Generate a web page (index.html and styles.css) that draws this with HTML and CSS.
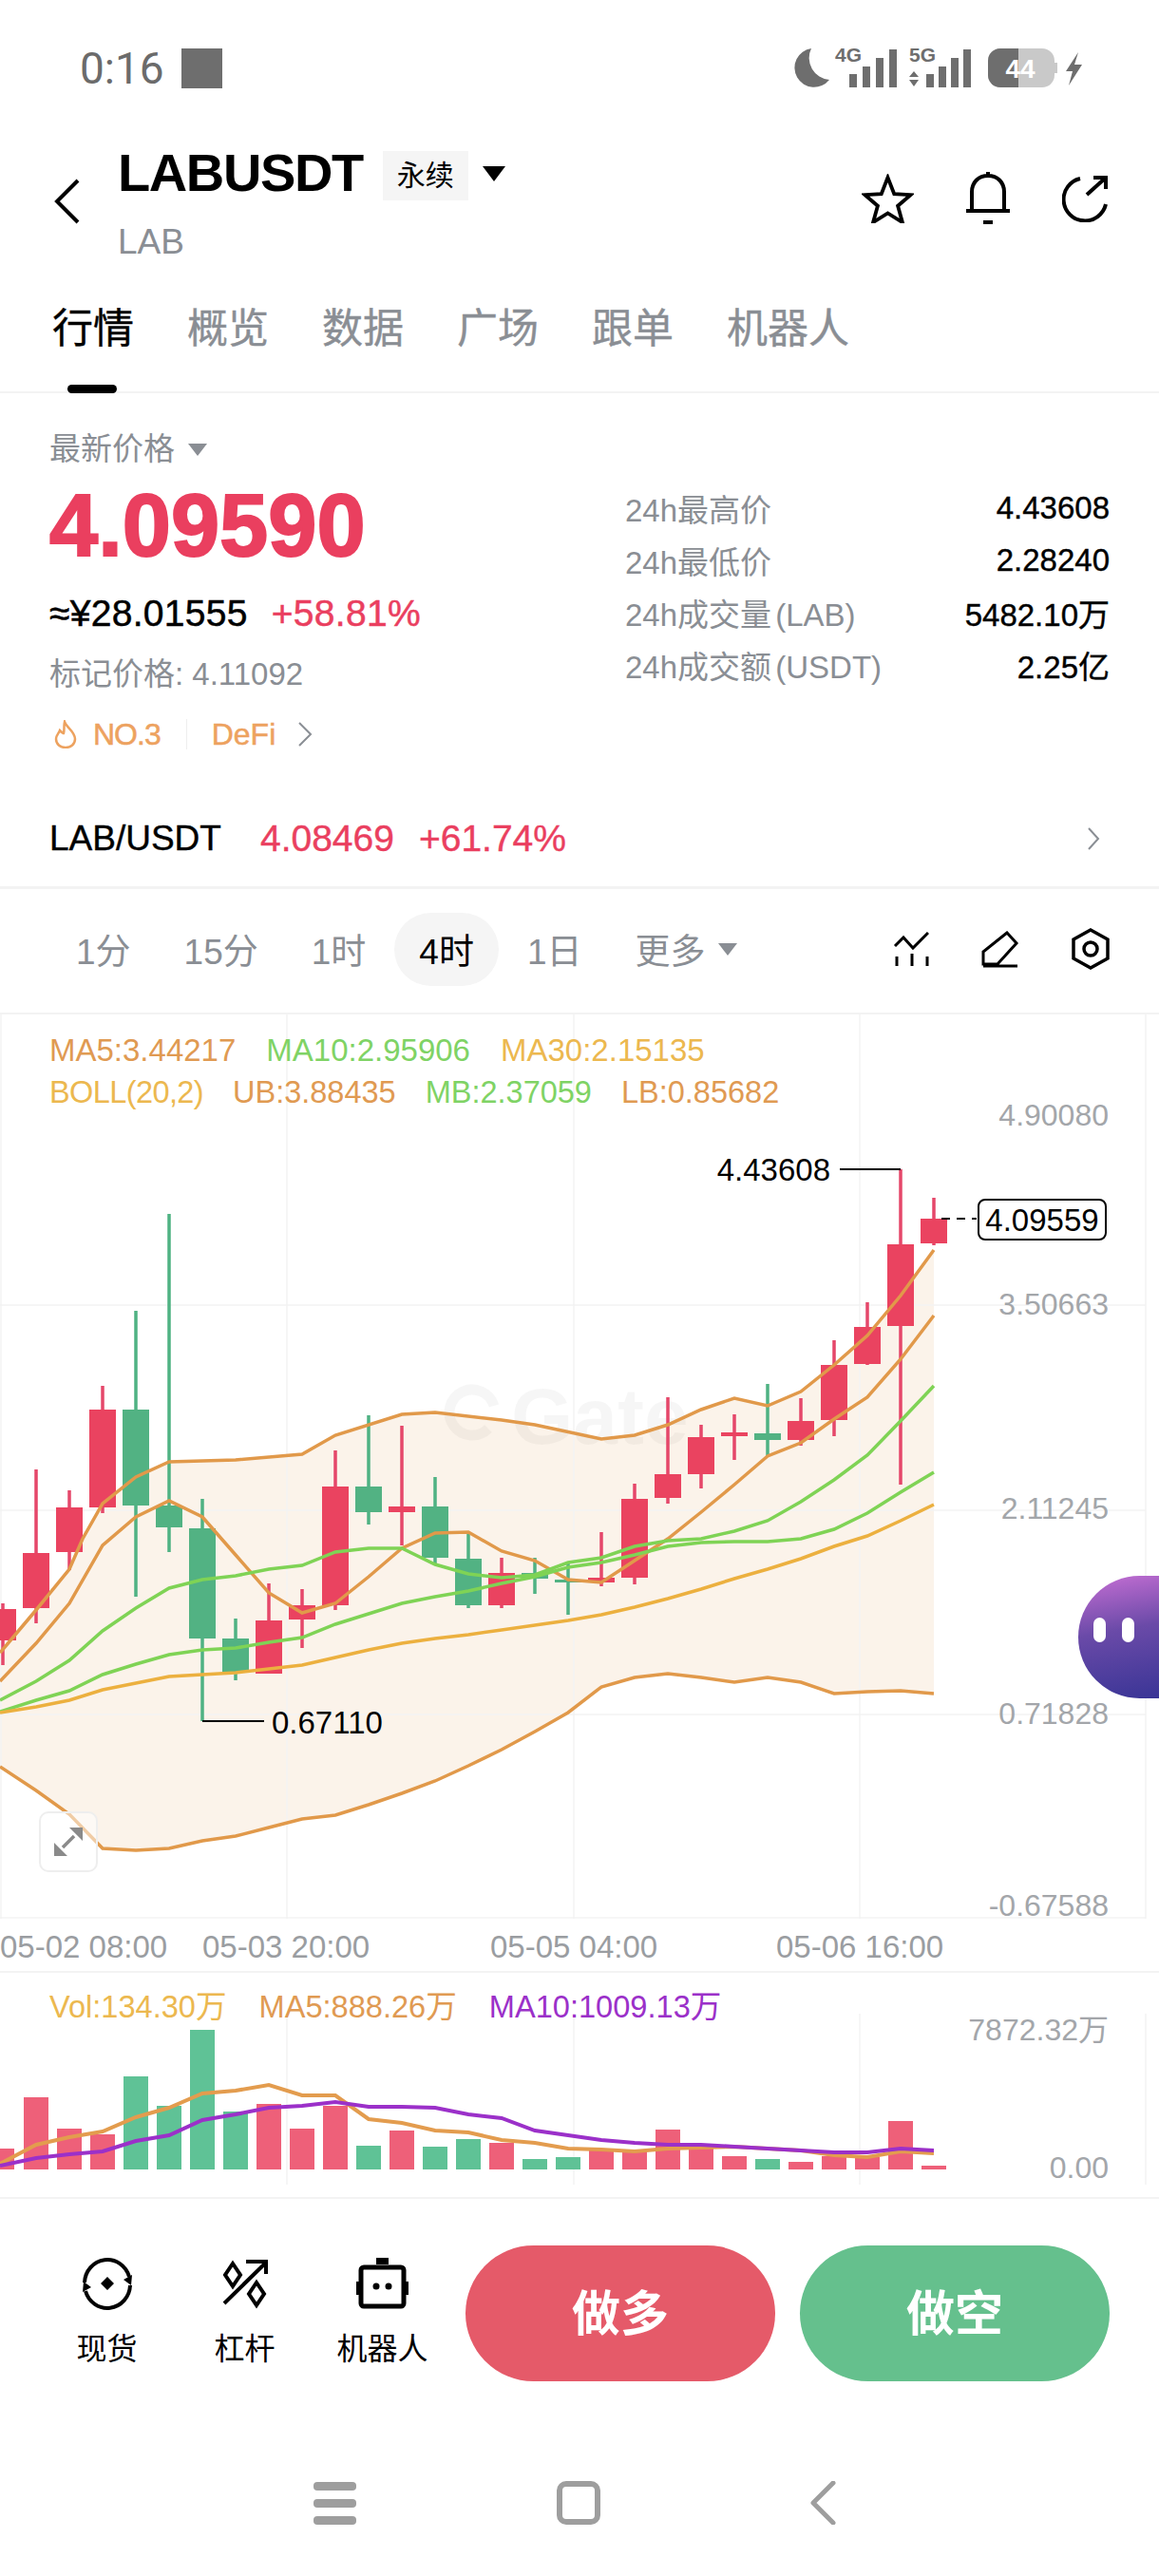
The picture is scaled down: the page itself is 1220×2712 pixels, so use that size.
FILE: index.html
```html
<!DOCTYPE html>
<html lang="zh">

<head>
    <meta charset="UTF-8" />
    <meta name="viewport" content="width=device-width, initial-scale=1" />
    <title>LABUSDT 永续</title>
    <link rel="stylesheet" href="styles.css">
</head>

<body>
    <div class="status-bar">
        <div class="status-left">
            <span class="status-time">0:16</span>
            <span class="status-square"></span>
        </div>
        <svg class="status-icons" width="307" height="48" viewBox="0 -6 307 48">
            <path d="M21 0A20.5 20.5 0 1 0 40 33A23 23 0 0 1 21 0Z" fill="#6e6e6e" />
            <text class="net" x="60" y="14">4G</text>
            <path d="M61 27h8v14h-8zM75 19h8v22h-8zM89 10h8v31h-8zM103 1h8v40h-8z" fill="#6e6e6e" />
            <text class="net" x="138" y="14">5G</text>
            <path d="M129 24l5 6h-10zM129 40l5-7h-10z" fill="#6e6e6e" />
            <path d="M142 27h8v14h-8zM155 19h8v22h-8zM168 10h8v31h-8zM181 1h8v40h-8z" fill="#6e6e6e" />
            <rect x="207" y="0" width="70" height="41" rx="13" fill="#c9c9c9" />
            <path d="M220 0h19v41h-19a13 13 0 0 1-13-13V13a13 13 0 0 1 13-13Z" fill="#6e6e6e" />
            <path d="M277 15h3v11h-3z" fill="#c9c9c9" />
            <text class="batt" x="241" y="31">44</text>
            <path d="M302 4L289 24h7l-4 15 14-22h-8Z" fill="#6e6e6e" />
        </svg>
    </div>

    <header class="header">
        <svg class="back-icon" width="27" height="48" viewBox="0 0 27 48">
            <path d="M25 2L3 24l22 22" fill="none" stroke="#000" stroke-width="4" />
        </svg>
        <div class="title-block">
            <div class="title-row">
                <h1>LABUSDT</h1>
                <span class="badge">永续</span>
                <span class="caret"></span>
            </div>
            <div class="subtitle">LAB</div>
        </div>
        <div class="header-icons">
            <svg width="55" height="52" viewBox="0 0 56 54">
                <path d="M28 4l7 18 18 1-14 12 5 18-16-10-16 10 5-18L3 23l18-1Z" fill="none" stroke="#000" stroke-width="4" />
            </svg>
            <svg width="48" height="56" viewBox="0 0 48 56">
                <path d="M7 39V21C7 11 14 4 24 4s17 7 17 17v18M1 41h46M24 0v5M19 53h10" fill="none" stroke="#000" stroke-width="4" />
            </svg>
            <svg width="48" height="50" viewBox="0 0 48 50">
                <path d="M19 4a22.5 22.5 0 1 0 27 27M26 21L46 3M33 3h13v12" fill="none" stroke="#000" stroke-width="4" />
            </svg>
        </div>
    </header>

    <nav class="tabs">
        <a class="tab active">行情</a>
        <a class="tab">概览</a>
        <a class="tab">数据</a>
        <a class="tab">广场</a>
        <a class="tab">跟单</a>
        <a class="tab">机器人</a>
    </nav>

    <section class="market">
        <div class="market-left">
            <div class="price-label">最新价格<span class="caret-gray"></span></div>
            <div class="last-price">4.09590</div>
            <div class="price-sub">
                <span>≈¥28.01555</span>
                <span class="red">+58.81%</span>
            </div>
            <div class="mark-price">标记价格: 4.11092</div>
            <div class="tags">
                <svg width="24" height="30" viewBox="0 0 24 30">
                    <path d="M11 2c2 6 11 10 11 18 0 6-5 9-10 9S2 26 2 20c0-4 3-6 4-9 2 2 3 3 4 3 1-4 0-8 1-12Z" fill="none" stroke="#eda25f" stroke-width="2.5" />
                </svg>
                <span class="tag-rank">NO.3</span>
                <span class="tag-line"></span>
                <span class="tag-name">DeFi</span>
                <svg width="16" height="28" viewBox="0 0 16 28">
                    <path d="M2 2l12 12L2 26" fill="none" stroke="#8a8e94" stroke-width="2" />
                </svg>
            </div>
        </div>
        <div class="market-right">
            <div class="stat"><span class="stat-name">24h最高价</span><span>4.43608</span></div>
            <div class="stat"><span class="stat-name">24h最低价</span><span>2.28240</span></div>
            <div class="stat"><span class="stat-name">24h成交量 (LAB)</span><span>5482.10万</span></div>
            <div class="stat"><span class="stat-name">24h成交额 (USDT)</span><span>2.25亿</span></div>
        </div>
    </section>

    <div class="pair-row">
        <span class="pair-name">LAB/USDT</span>
        <span class="red pair-price">4.08469</span>
        <span class="red pair-change">+61.74%</span>
        <svg class="pair-arrow" width="14" height="26" viewBox="0 0 14 26">
            <path d="M2 2l10 11L2 24" fill="none" stroke="#8a8e94" stroke-width="2" />
        </svg>
    </div>

    <div class="periods">
        <span class="period">1分</span>
        <span class="period">15分</span>
        <span class="period">1时</span>
        <span class="period active">4时</span>
        <span class="period">1日</span>
        <span class="period">更多<span class="caret-gray"></span></span>
        <div class="period-tools">
            <svg width="38" height="37" viewBox="0 0 38 37">
                <path d="M2 15L11 6l10 11L37 1M4 26v10M20 23v13M36 26v10" fill="none" stroke="#000" stroke-width="3" />
            </svg>
            <svg width="40" height="39" viewBox="0 0 40 39">
                <path d="M27 2L2 22v13h15l20-22ZM2 37h36" fill="none" stroke="#000" stroke-width="3" />
            </svg>
            <svg width="40" height="44" viewBox="0 0 40 44">
                <path d="M20 2l18 10v20L20 42 2 32V12Z" fill="none" stroke="#000" stroke-width="3.5" />
                <circle cx="20" cy="22" r="7" fill="none" stroke="#000" stroke-width="3.5" />
            </svg>
        </div>
    </div>

    <section class="chart">
        <div class="legend">
            <div class="legend-row ma-row">
                <span class="c-orange">MA5:3.44217</span>
                <span class="c-green">MA10:2.95906</span>
                <span class="c-yellow">MA30:2.15135</span>
            </div>
            <div class="legend-row">
                <span class="c-yellow boll-name">BOLL(20,2)</span>
                <span class="c-orange">UB:3.88435</span>
                <span class="c-green">MB:2.37059</span>
                <span class="c-orange">LB:0.85682</span>
            </div>
        </div>

        <svg class="chart-svg" width="1220" height="952" viewBox="0 1068 1220 952">
            <!-- boll band -->
            <path class="band" d="M0 1740L38 1695 73 1652 87 1620 108 1583 143 1555 178 1539 248 1537 318 1531 353 1511 423 1489 458 1487 528 1495 563 1500 633 1515 668 1511 703 1500 738 1484 773 1472 808 1480 843 1465 878 1437 913 1406 948 1364 983 1316V1783L948 1780 913 1781 878 1783 843 1771 808 1766 773 1771 738 1766 703 1762 668 1766 633 1776 598 1803 563 1823 528 1842 493 1859 458 1875 423 1888 388 1900 353 1911 318 1915 283 1924 248 1933 213 1938 178 1946 143 1948 108 1946 73 1910 38 1885 0 1860Z" />

            <path class="grid" d="M1 1068V2020M302 1068V2020M604 1068V2020M905 1068V2020M1206 1068V2020M0 1374H1206M0 1590H1206M0 1805H1206M0 2019H1206" />

            <!-- watermark -->
            <path class="mark-ring" d="M520 1480a24 24 0 1 0 -6 24" />
            <text class="mark-text" x="538" y="1520">Gate</text>

            <!-- candles -->
            <path class="wick-up" d="M3 1688V1753M38 1547V1709M73 1569V1653M108 1459V1593M283 1667V1762M318 1673V1735M353 1527V1695M423 1501V1627M528 1640V1693M633 1613V1670M668 1562V1668M703 1471V1583M738 1500V1567M773 1489V1537M843 1472V1522M878 1411V1512M913 1371V1437M948 1231V1563M983 1261V1311" />
            <path class="body-up" d="M-11 1694h28v33h-28zM24 1635h28v58h-28zM59 1587h28v47h-28zM94 1484h28v103h-28zM269 1706h28v56h-28zM304 1690h28v15h-28zM339 1565h28v125h-28zM409 1586h28v6h-28zM514 1656h28v34h-28zM619 1661h28v5h-28zM654 1578h28v83h-28zM689 1552h28v25h-28zM724 1513h28v39h-28zM759 1508h28v4h-28zM829 1496h28v20h-28zM864 1437h28v58h-28zM899 1397h28v39h-28zM934 1310h28v86h-28zM969 1283h28v26h-28z" />
            <path class="wick-down" d="M143 1380V1681M178 1278V1634M213 1578V1812M248 1704V1769M388 1490V1605M458 1555V1647M493 1612V1693M563 1640V1678M598 1645V1700M808 1457V1533" />
            <path class="body-down" d="M129 1484h28v101h-28zM164 1585h28v23h-28zM199 1609h28v116h-28zM234 1725h28v35h-28zM374 1565h28v27h-28zM444 1586h28v54h-28zM479 1641h28v49h-28zM549 1656h28v6h-28zM584 1663h28v3h-28zM794 1509h28v7h-28z" />

            <!-- indicators -->
            <polyline class="line-orange" points="0,1740 38,1695 73,1652 87,1620 108,1583 143,1555 178,1539 248,1537 318,1531 353,1511 423,1489 458,1487 528,1495 563,1500 633,1515 668,1511 703,1500 738,1484 773,1472 808,1480 843,1465 878,1437 913,1406 948,1364 983,1316" />
            <polyline class="line-orange" points="0,1770 38,1730 73,1688 108,1627 143,1597 178,1580 213,1597 248,1637 283,1677 318,1698 353,1688 388,1660 423,1630 458,1614 493,1613 528,1633 563,1643 598,1663 633,1666 668,1643 703,1620 738,1592 773,1563 808,1533 843,1519 878,1494 913,1471 948,1431 983,1385" />
            <polyline class="line-orange" points="0,1860 38,1885 73,1910 108,1946 143,1948 178,1946 213,1938 248,1933 283,1924 318,1915 353,1911 388,1900 423,1888 458,1875 493,1859 528,1842 563,1823 598,1803 633,1776 668,1766 703,1762 738,1766 773,1771 808,1766 843,1771 878,1783 913,1781 948,1780 983,1783" />
            <polyline class="line-green" points="0,1790 38,1770 73,1748 108,1717 143,1693 178,1672 213,1663 248,1659 283,1652 318,1648 353,1634 388,1630 423,1630 458,1647 493,1657 528,1661 563,1658 598,1645 633,1640 668,1628 703,1622 738,1620 773,1612 808,1601 843,1581 878,1558 913,1532 948,1496 983,1459" />
            <polyline class="line-green" points="0,1802 38,1790 73,1780 108,1763 143,1752 178,1742 213,1737 248,1735 283,1729 318,1724 353,1710 388,1699 423,1688 458,1681 493,1675 528,1667 563,1660 598,1650 633,1645 668,1637 703,1628 738,1624 773,1623 808,1623 843,1620 878,1610 913,1593 948,1571 983,1550" />
            <polyline class="line-yellow" points="0,1803 38,1797 73,1790 108,1779 143,1772 178,1765 213,1763 248,1761 283,1757 318,1753 353,1745 388,1737 423,1730 458,1725 493,1721 528,1716 563,1711 598,1706 633,1700 668,1692 703,1683 738,1673 773,1662 808,1652 843,1641 878,1628 913,1617 948,1601 983,1584" />

            <!-- high, low and last price -->
            <path class="leader" d="M884 1231H948M213 1812H278" />
            <text class="price-note" x="874" y="1243" text-anchor="end">4.43608</text>
            <text class="price-note" x="286" y="1825">0.67110</text>
            <path class="dash" d="M991 1283H1028" />
            <rect class="last-box" x="1030" y="1263" width="134" height="42" rx="7" />
            <text class="price-note" x="1097" y="1296" text-anchor="middle">4.09559</text>

            <text class="axis" x="1167" y="1185">4.90080</text>
            <text class="axis" x="1167" y="1384">3.50663</text>
            <text class="axis" x="1167" y="1599">2.11245</text>
            <text class="axis" x="1167" y="1815">0.71828</text>
            <text class="axis" x="1167" y="2017">-0.67588</text>
        </svg>

        <button class="expand-btn">
            <svg width="30" height="30" viewBox="0 0 30 30">
                <path d="M30 0v14L16 0ZM0 30V16l14 14Z" fill="#8a8a8a" />
                <path d="M21 9l-12 12" stroke="#8a8a8a" stroke-width="3.5" />
            </svg>
        </button>

        <div class="bubble">
            <span class="bubble-eye"></span>
            <span class="bubble-eye"></span>
        </div>
    </section>

    <div class="time-axis">
        <span>05-02 08:00</span>
        <span>05-03 20:00</span>
        <span>05-05 04:00</span>
        <span>05-06 16:00</span>
    </div>

    <section class="volume">
        <div class="vol-legend">
            <span class="c-yellow">Vol:134.30万</span>
            <span class="c-orange">MA5:888.26万</span>
            <span class="c-purple">MA10:1009.13万</span>
        </div>
        <svg class="chart-svg" width="1220" height="236" viewBox="0 2077 1220 236">
            <path class="grid" d="M302 2120V2300M604 2120V2300M905 2120V2300M1206 2120V2300" />
            <path class="vol-up" d="M-11 2262h26v22h-26zM25 2208h26v76h-26zM60 2241h26v43h-26zM95 2247h26v37h-26zM270 2215h26v69h-26zM305 2241h26v43h-26zM340 2217h26v67h-26zM410 2243h26v41h-26zM515 2256h26v28h-26zM620 2264h26v20h-26zM655 2264h26v20h-26zM690 2242h26v42h-26zM725 2260h26v24h-26zM760 2270h26v14h-26zM830 2276h26v8h-26zM865 2270h26v14h-26zM900 2271h26v13h-26zM935 2233h26v51h-26zM970 2280h26v4h-26z" />
            <path class="vol-down" d="M130 2186h26v98h-26zM165 2217h26v67h-26zM200 2137h26v147h-26zM235 2223h26v61h-26zM375 2259h26v25h-26zM445 2260h26v24h-26zM480 2252h26v32h-26zM550 2273h26v11h-26zM585 2271h26v13h-26zM795 2273h26v11h-26z" />
            <polyline class="vol-ma5" points="0,2278 38,2258 73,2250 108,2244 143,2229 178,2219 213,2204 248,2201 283,2195 318,2206 353,2206 388,2231 423,2235 458,2243 493,2245 528,2253 563,2256 598,2262 633,2263 668,2265 703,2262 738,2261 773,2260 808,2262 843,2264 878,2269 913,2271 948,2265 983,2267" />
            <polyline class="vol-ma10" points="0,2280 38,2272 73,2268 108,2265 143,2254 178,2248 213,2232 248,2226 283,2219 318,2217 353,2213 388,2218 423,2218 458,2219 493,2226 528,2230 563,2243 598,2248 633,2253 668,2256 703,2258 738,2258 773,2260 808,2262 843,2264 878,2266 913,2266 948,2262 983,2264" />
            <text class="axis" x="1167" y="2148">7872.32万</text>
            <text class="axis" x="1167" y="2293">0.00</text>
        </svg>
    </section>

    <div class="trade-bar">
        <div class="tools">
            <div class="tool">
                <svg width="56" height="56" viewBox="0 0 56 56">
                    <path d="M4 27A24 25 0 0 1 51 21M52 30A24 25 0 0 1 5 36" fill="none" stroke="#000" stroke-width="4" />
                    <path d="M54 19l-1 11-8-6ZM2 37l1-11 8 6ZM28 21l7 7-7 7-7-7Z" />
                </svg>
                <span>现货</span>
            </div>
            <div class="tool">
                <svg width="48" height="50" viewBox="0 0 48 50" fill="none" stroke="#000" stroke-width="4">
                    <path d="M2 46L46 3M25 2h21v13" />
                    <path d="M11 4l8 12-8 12-8-12ZM36 24l8 12-8 12-8-12Z" />
                </svg>
                <span>杠杆</span>
            </div>
            <div class="tool">
                <svg width="55" height="54" viewBox="0 0 55 54">
                    <rect x="5" y="10" width="45" height="41" rx="3" fill="none" stroke="#000" stroke-width="5" />
                    <path d="M21 0h13v7H21zM0 25h3v14H0zM52 25h3v14h-3z" />
                    <circle cx="21" cy="30" r="3.5" />
                    <circle cx="34" cy="30" r="3.5" />
                </svg>
                <span>机器人</span>
            </div>
        </div>
        <div class="trade-buttons">
            <button class="trade-btn long">做多</button>
            <button class="trade-btn short">做空</button>
        </div>
    </div>

    <div class="nav-bar">
        <span class="nav-menu"><i></i><i></i><i></i></span>
        <span class="nav-home"></span>
        <svg width="28" height="46" viewBox="0 0 28 46">
            <path d="M25 2L4 23l21 21" fill="none" stroke="#9e9e9e" stroke-width="5" stroke-linecap="round" stroke-linejoin="round" />
        </svg>
    </div>
</body>

</html>
```

FILE: styles.css
```css
* {
    margin: 0;
    padding: 0;
    box-sizing: border-box;
    font-family: 'Liberation Sans', 'Noto Sans CJK SC', sans-serif;
}

body {
    width: 1220px;
    background-color: #fff;
    color: #000;
    overflow-x: hidden;
}

svg {
    display: block;
}

.red {
    color: #ea3f5f;
}

.c-orange {
    color: #e09a52;
}

.c-green {
    color: #7fd365;
}

.c-yellow {
    color: #ecb84f;
}

.c-purple {
    color: #9b30c9;
}

/* status bar */
.status-bar {
    height: 150px;
    padding: 51px 80px 0 84px;
    display: flex;
    justify-content: space-between;
    align-items: flex-start;
}

.status-left {
    display: flex;
    align-items: center;
    gap: 18px;
}

.status-time {
    font-family: Roboto, sans-serif;
    font-size: 46px;
    line-height: 42px;
    color: #6b6b6b;
}

.status-square {
    width: 43px;
    height: 42px;
    background-color: #6e6e6e;
}

.status-icons {
    margin-top: -6px;
}

.status-icons .net {
    font-size: 21px;
    font-weight: 700;
    fill: #6e6e6e;
    text-anchor: middle;
}

.status-icons .batt {
    font-size: 28px;
    font-weight: 700;
    fill: #fff;
    text-anchor: middle;
}

/* header */
.header {
    height: 146px;
    padding: 0 54px 0 57px;
    display: flex;
}

.back-icon {
    margin-top: 38px;
    margin-right: 40px;
}

.title-row {
    margin-top: 9px;
    height: 52px;
    display: flex;
    align-items: center;
}

.title-row h1 {
    font-size: 56px;
    font-weight: 700;
    letter-spacing: -1.4px;
    line-height: 52px;
    margin-top: -6px;
}

.badge {
    margin-left: 21px;
    width: 90px;
    height: 52px;
    line-height: 52px;
    text-align: center;
    font-size: 30px;
    background-color: #f5f5f5;
}

.caret {
    margin-left: 15px;
    margin-top: -4px;
    border-left: 12px solid transparent;
    border-right: 12px solid transparent;
    border-top: 16px solid #000;
}

.subtitle {
    margin-top: 26px;
    font-size: 37px;
    line-height: 36px;
    color: #8a8e94;
}

.header-icons {
    margin-left: auto;
    margin-top: 31px;
    height: 56px;
    display: flex;
    align-items: center;
    gap: 54px;
}

/* tabs */
.tabs {
    height: 118px;
    padding: 29px 0 0 55px;
    display: flex;
    gap: 56px;
    border-bottom: 2px solid #f3f3f3;
}

.tab {
    position: relative;
    font-size: 43px;
    line-height: 43px;
    height: 43px;
    color: #8a8e94;
    -webkit-text-stroke: 0.4px #8a8e94;
}

.tab.active {
    color: #000;
    -webkit-text-stroke: 0.4px #000;
}

.tab.active::after {
    content: '';
    position: absolute;
    left: 16px;
    top: 80px;
    width: 52px;
    height: 9px;
    border-radius: 5px;
    background-color: #000;
}

/* market info */
.market {
    height: 416px;
    padding: 0 52px;
    display: flex;
    justify-content: space-between;
}

.price-label {
    margin-top: 42px;
    font-size: 33px;
    line-height: 34px;
    color: #8a8e94;
    display: flex;
    align-items: center;
}

.caret-gray {
    display: inline-block;
    margin-left: 14px;
    border-left: 10px solid transparent;
    border-right: 10px solid transparent;
    border-top: 13px solid #8a8e94;
}

.last-price {
    margin-top: 17px;
    font-size: 92px;
    font-weight: 700;
    line-height: 92px;
    color: #ea3f5f;
    -webkit-text-stroke: 2px #ea3f5f;
}

.price-sub {
    margin-top: 27px;
    font-size: 39px;
    line-height: 40px;
    display: flex;
    gap: 25px;
    -webkit-text-stroke: 0.5px;
    letter-spacing: 0.3px;
}

.mark-price {
    margin-top: 27px;
    font-size: 33px;
    line-height: 34px;
    color: #8a8e94;
}

.tags {
    margin-top: 29px;
    height: 34px;
    padding-left: 5px;
    display: flex;
    align-items: center;
    font-size: 32px;
    color: #eda25f;
    -webkit-text-stroke: 0.5px #eda25f;
}

.tag-rank {
    margin-left: 17px;
    letter-spacing: -1px;
}

.tag-line {
    width: 1px;
    height: 32px;
    margin: 0 26px 0 27px;
    background-color: #eee;
}

.tag-name {
    margin-right: 23px;
}

.market-right {
    width: 510px;
    padding-top: 93px;
}

.stat {
    height: 55px;
    font-size: 33px;
    display: flex;
    justify-content: space-between;
    align-items: center;
    -webkit-text-stroke: 0.4px;
}

.stat-name {
    color: #8a8e94;
    word-spacing: -5px;
    -webkit-text-stroke: 0;
}

/* spot pair row */
.pair-row {
    height: 106px;
    padding: 2px 62px 0 52px;
    display: flex;
    align-items: center;
    font-size: 39px;
    border-bottom: 3px solid #f3f3f3;
}

.pair-name {
    font-size: 37px;
    -webkit-text-stroke: 0.4px;
}

.pair-price {
    margin-left: 41px;
    -webkit-text-stroke: 0.4px;
}

.pair-change {
    margin-left: 26px;
    -webkit-text-stroke: 0.4px;
}

.pair-arrow {
    margin-left: auto;
}

/* period selector */
.periods {
    height: 132px;
    padding: 0 52px 4px 54px;
    display: flex;
    align-items: center;
    gap: 4px;
    border-bottom: 2px solid #f3f3f3;
}

.period {
    height: 77px;
    padding: 0 26px;
    display: flex;
    align-items: center;
    font-size: 37px;
    color: #8a8e94;
}

.period.active {
    color: #000;
    background-color: #f5f5f5;
    border-radius: 40px;
}

.period-tools {
    margin-left: auto;
    display: flex;
    align-items: center;
    gap: 55px;
}

/* candlestick chart */
.chart {
    position: relative;
    height: 952px;
}

.chart-svg {
    overflow: visible;
}

.legend {
    position: absolute;
    left: 52px;
    top: 16px;
}

.legend-row {
    display: flex;
    gap: 31px;
    height: 44px;
    line-height: 44px;
    font-size: 32.5px;
}

.ma-row {
    font-size: 33px;
    gap: 32px;
}

.boll-name {
    letter-spacing: -0.6px;
}

.band {
    fill: #fbf3ea;
}

.grid {
    fill: none;
    stroke: #f3f3f3;
    stroke-width: 1.5;
}

.mark-ring {
    fill: none;
    stroke: rgba(0, 0, 0, 0.035);
    stroke-width: 11;
}

.mark-text {
    font-size: 84px;
    font-weight: 700;
    fill: rgba(0, 0, 0, 0.035);
}

.wick-up {
    stroke: #e5476a;
    stroke-width: 3.5;
}

.body-up {
    fill: #ea4360;
}

.wick-down {
    stroke: #4fb283;
    stroke-width: 3.5;
}

.body-down {
    fill: #52b283;
}

.line-orange,
.line-green,
.line-yellow {
    fill: none;
    stroke-width: 3.5;
}

.line-orange {
    stroke: #e1994a;
}

.line-green {
    stroke: #7fd355;
}

.line-yellow {
    stroke: #ecb03f;
}

.leader {
    fill: none;
    stroke: #000;
    stroke-width: 2;
}

.dash {
    fill: none;
    stroke: #000;
    stroke-width: 2;
    stroke-dasharray: 9 7;
}

.last-box {
    fill: #fff;
    stroke: #000;
    stroke-width: 2;
}

.price-note {
    font-size: 33px;
    fill: #000;
}

.axis {
    font-size: 32px;
    fill: #a3a6aa;
    text-anchor: end;
}

.expand-btn {
    position: absolute;
    left: 41px;
    top: 839px;
    width: 62px;
    height: 64px;
    display: flex;
    align-items: center;
    justify-content: center;
    border: 2px solid #eeeeee;
    border-radius: 10px;
    background-color: rgba(255, 255, 255, 0.5);
}

.bubble {
    position: absolute;
    right: 0;
    top: 591px;
    width: 85px;
    height: 129px;
    padding: 44px 0 0 16px;
    display: flex;
    gap: 17px;
    border-radius: 65px 0 0 65px;
    background: linear-gradient(170deg, #c66fd4 0%, #6a4aa8 45%, #3a3596 100%);
}

.bubble-eye {
    width: 13px;
    height: 26px;
    border-radius: 7px;
    background-color: #fff;
}

/* time axis */
.time-axis {
    height: 57px;
    padding-top: 12px;
    display: grid;
    grid-template-columns: 213px 303px 301px auto;
    font-size: 33px;
    line-height: 36px;
    color: #9a9da1;
    border-bottom: 2px solid #f3f3f3;
}

/* volume pane */
.volume {
    position: relative;
    height: 238px;
    border-bottom: 2px solid #f3f3f3;
}

.vol-legend {
    position: absolute;
    left: 52px;
    top: 18px;
    display: flex;
    gap: 34px;
    font-size: 32.6px;
    line-height: 36px;
}

.vol-up {
    fill: #ee6079;
}

.vol-down {
    fill: #5fc296;
}

.vol-ma5,
.vol-ma10 {
    fill: none;
    stroke-width: 4;
}

.vol-ma5 {
    stroke: #e39c4e;
}

.vol-ma10 {
    stroke: #9b30c9;
}

/* bottom trade bar */
.trade-bar {
    height: 225px;
    padding: 49px 52px 0 40px;
    display: flex;
    gap: 15px;
}

.tools {
    display: flex;
}

.tool {
    width: 145px;
    margin-top: 12px;
    height: 115px;
    display: flex;
    flex-direction: column;
    align-items: center;
    font-size: 32px;
    line-height: 36px;
}

.tool svg {
    height: 56px;
}

.tool span {
    margin-top: 23px;
}

.trade-buttons {
    display: flex;
    gap: 26px;
}

.trade-btn {
    width: 326px;
    height: 143px;
    padding-bottom: 8px;
    border: none;
    border-radius: 72px;
    color: #fff;
    font-size: 51px;
    font-weight: 700;
}

.long {
    background-color: #e55a69;
}

.short {
    background-color: #65c08d;
}

/* android nav bar */
.nav-bar {
    height: 172px;
    padding: 72px 0 0 330px;
    display: flex;
    align-items: flex-start;
}

.nav-menu {
    width: 45px;
    margin-top: 1px;
    display: flex;
    flex-direction: column;
    gap: 9px;
}

.nav-menu i {
    height: 9px;
    border-radius: 4px;
    background-color: #9e9e9e;
}

.nav-home {
    width: 46px;
    height: 46px;
    margin-left: 211px;
    margin-right: 220px;
    border: 6px solid #9e9e9e;
    border-radius: 10px;
}
```
